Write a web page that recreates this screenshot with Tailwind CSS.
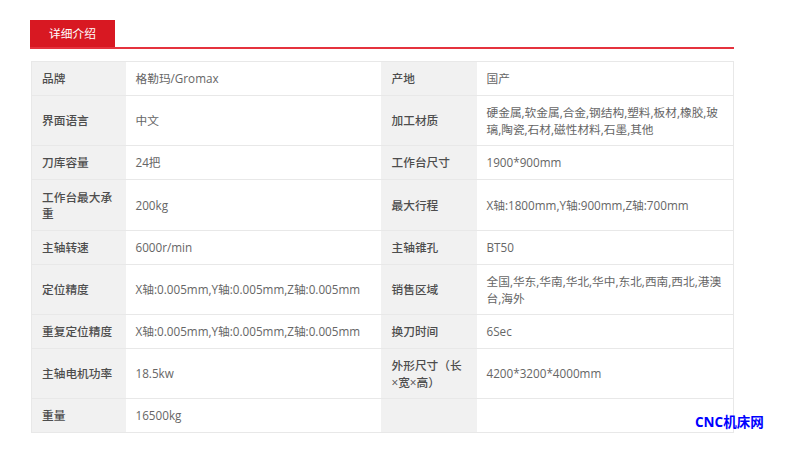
<!DOCTYPE html>
<html lang="zh">
<head>
    <meta charset="UTF-8">
    <title>详细介绍</title>
    <script src="https://cdn.jsdelivr.net/npm/@tailwindcss/browser@4"></script>
</head>
<body class="bg-white font-['Open_Sans','Noto_Sans_CJK_SC',sans-serif] text-[11.7px] text-[#666] h-[451px] overflow-hidden relative">
    <div class="ml-[30px] mr-[66px] pt-[20px]">
        <!-- tab -->
        <div class="border-b-2 border-[#e5323e] h-[29px]">
            <div class="w-[85px] h-[27px] bg-[#d81822] text-white flex items-center justify-center">详细介绍</div>
        </div>

        <!-- parameters -->
        <table class="mt-[12px] ml-px w-[703px] table-fixed border-collapse border border-[#e8e8e8] leading-[16.5px]">
            <colgroup>
                <col class="w-[94px]">
                <col class="w-[255px]">
                <col class="w-[96px]">
                <col>
            </colgroup>
            <tbody>
                <tr class="h-[34px] border-b border-[#e8e8e8]">
                    <td class="bg-[#f1f1f1] px-[10px] font-medium text-[#4d4d4d]">品牌</td>
                    <td class="px-[10px]">格勒玛/Gromax</td>
                    <td class="bg-[#f1f1f1] px-[11px] font-medium text-[#4d4d4d]">产地</td>
                    <td class="px-[10px]">国产</td>
                </tr>
                <tr class="h-[50px] border-b border-[#e8e8e8]">
                    <td class="bg-[#f1f1f1] px-[10px] font-medium text-[#4d4d4d]">界面语言</td>
                    <td class="px-[10px]">中文</td>
                    <td class="bg-[#f1f1f1] px-[11px] font-medium text-[#4d4d4d]">加工材质</td>
                    <td class="px-[10px]">硬金属,软金属,合金,钢结构,塑料,板材,橡胶,玻璃,陶瓷,石材,磁性材料,石墨,其他</td>
                </tr>
                <tr class="h-[34px] border-b border-[#e8e8e8]">
                    <td class="bg-[#f1f1f1] px-[10px] font-medium text-[#4d4d4d]">刀库容量</td>
                    <td class="px-[10px]">24把</td>
                    <td class="bg-[#f1f1f1] px-[11px] font-medium text-[#4d4d4d]">工作台尺寸</td>
                    <td class="px-[10px]">1900*900mm</td>
                </tr>
                <tr class="h-[51px] border-b border-[#e8e8e8]">
                    <td class="bg-[#f1f1f1] px-[10px] font-medium text-[#4d4d4d]">工作台最大承重</td>
                    <td class="px-[10px]">200kg</td>
                    <td class="bg-[#f1f1f1] px-[11px] font-medium text-[#4d4d4d]">最大行程</td>
                    <td class="px-[10px]">X轴:1800mm,Y轴:900mm,Z轴:700mm</td>
                </tr>
                <tr class="h-[34px] border-b border-[#e8e8e8]">
                    <td class="bg-[#f1f1f1] px-[10px] font-medium text-[#4d4d4d]">主轴转速</td>
                    <td class="px-[10px]">6000r/min</td>
                    <td class="bg-[#f1f1f1] px-[11px] font-medium text-[#4d4d4d]">主轴锥孔</td>
                    <td class="px-[10px]">BT50</td>
                </tr>
                <tr class="h-[50px] border-b border-[#e8e8e8]">
                    <td class="bg-[#f1f1f1] px-[10px] font-medium text-[#4d4d4d]">定位精度</td>
                    <td class="px-[10px]">X轴:0.005mm,Y轴:0.005mm,Z轴:0.005mm</td>
                    <td class="bg-[#f1f1f1] px-[11px] font-medium text-[#4d4d4d]">销售区域</td>
                    <td class="px-[10px]">全国,华东,华南,华北,华中,东北,西南,西北,港澳台,海外</td>
                </tr>
                <tr class="h-[34px] border-b border-[#e8e8e8]">
                    <td class="bg-[#f1f1f1] px-[10px] font-medium text-[#4d4d4d]">重复定位精度</td>
                    <td class="px-[10px]">X轴:0.005mm,Y轴:0.005mm,Z轴:0.005mm</td>
                    <td class="bg-[#f1f1f1] px-[11px] font-medium text-[#4d4d4d]">换刀时间</td>
                    <td class="px-[10px]">6Sec</td>
                </tr>
                <tr class="h-[50px] border-b border-[#e8e8e8]">
                    <td class="bg-[#f1f1f1] px-[10px] font-medium text-[#4d4d4d]">主轴电机功率</td>
                    <td class="px-[10px]">18.5kw</td>
                    <td class="bg-[#f1f1f1] px-[11px] font-medium text-[#4d4d4d]">外形尺寸（长×宽×高）</td>
                    <td class="px-[10px]">4200*3200*4000mm</td>
                </tr>
                <tr class="h-[34px]">
                    <td class="bg-[#f1f1f1] px-[10px] font-medium text-[#4d4d4d]">重量</td>
                    <td class="px-[10px]">16500kg</td>
                    <td class="bg-[#f1f1f1] px-[11px] font-medium text-[#4d4d4d]"></td>
                    <td class="px-[10px]"></td>
                </tr>
            </tbody>
        </table>
    </div>

    <!-- watermark -->
    <div class="absolute left-[695px] top-[412px] text-[13.5px] leading-[20px] font-bold text-[#0000ff]">CNC机床网</div>
</body>
</html>
